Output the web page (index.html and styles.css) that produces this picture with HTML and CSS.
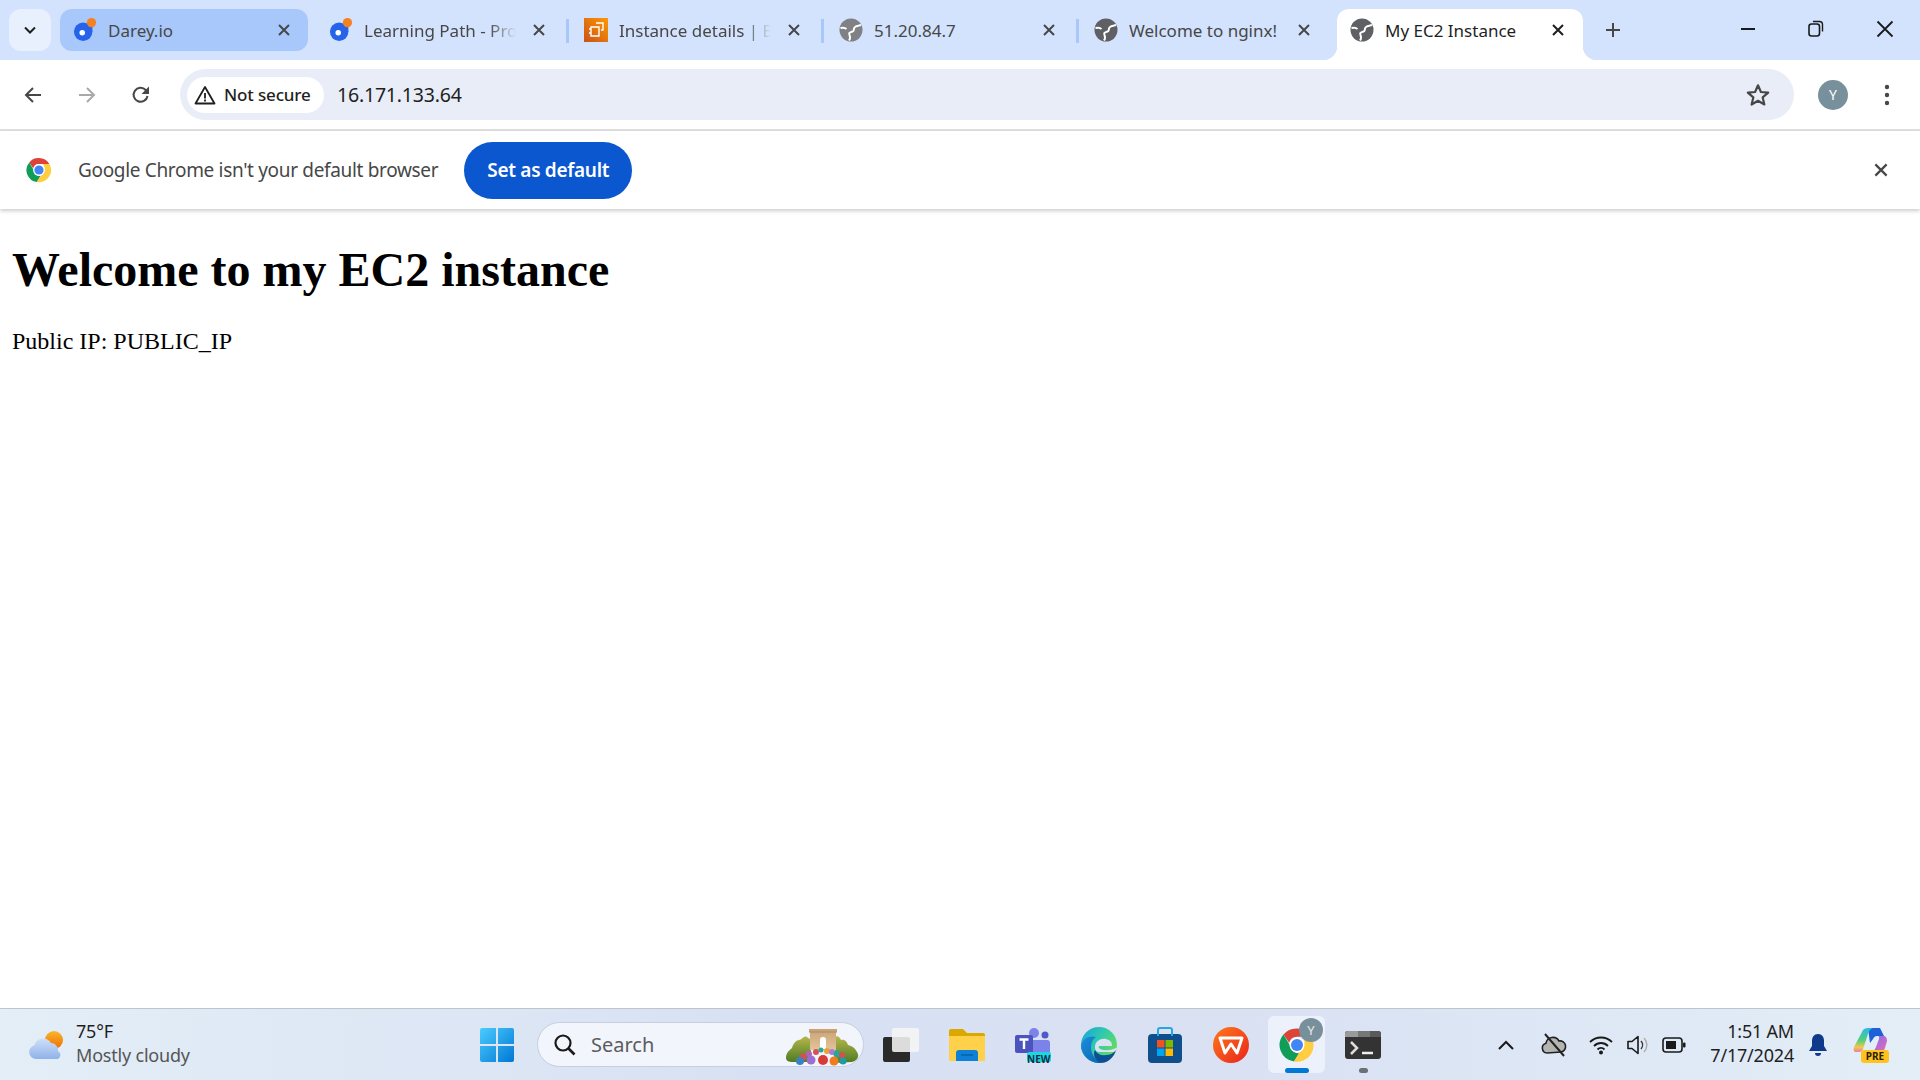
FILE: index.html
```html
<!DOCTYPE html>
<html lang="en">
<head>
  <meta charset="UTF-8" />
  <title>My EC2 Instance</title>
  <link rel="stylesheet" href="styles.css">
</head>
<body>

<svg class="defs" width="0" height="0">
  <symbol id="globe" viewBox="0 0 24 24">
    <circle cx="12" cy="12" r="11.500" fill="currentColor"/>
    <path d="M22 7c-3 1-5 .5-6.500 2.500s.5 3-2 4-4 1-3 3.500 1 3.500-.5 5.500" fill="none" stroke="#fff" stroke-width="2"/>
    <path d="M1.500 10c2.500-.5 4.500-.5 6 1" fill="none" stroke="#fff" stroke-width="1.800"/>
  </symbol>
  <symbol id="cross" viewBox="0 0 16 16">
    <path d="M3 3l10 10M13 3L3 13" fill="none" stroke="currentColor" stroke-width="2"/>
  </symbol>
  <symbol id="darey" viewBox="0 0 26 26">
    <circle cx="11" cy="15" r="10" fill="#2563eb"/>
    <path d="M16 5h5v10h-5z" fill="#2563eb"/>
    <circle cx="10" cy="16" r="3" fill="#fff"/>
    <circle cx="20" cy="5" r="5" fill="#f58220"/>
  </symbol>
</svg>

<header class="tabstrip">
  <button class="tab-search">
    <svg width="14" height="14" viewBox="0 0 14 14"><path d="M2 4.500l5 5 5-5" fill="none" stroke="#1f1f1f" stroke-width="2"/></svg>
  </button>

  <div class="tab tab-hover">
    <svg class="favicon"><use href="#darey"/></svg>
    <span class="tab-title">Darey.io</span>
    <svg class="tab-close"><use href="#cross"/></svg>
  </div>
  <div class="tab">
    <svg class="favicon"><use href="#darey"/></svg>
    <span class="tab-title fade">Learning Path - Project</span>
    <svg class="tab-close"><use href="#cross"/></svg>
  </div>
  <div class="tab sep">
    <svg class="favicon" viewBox="0 0 24 24">
      <defs><linearGradient id="aws" x1="0" y1="1" x2="1" y2="0"><stop offset="0" stop-color="#c8511b"/><stop offset="1" stop-color="#f90"/></linearGradient></defs>
      <rect width="24" height="24" fill="url(#aws)"/>
      <path d="M12 5h7v7h-2M7 9h8v9H7zM5 11h2M5 15h2" fill="none" stroke="#fff" stroke-width="1.400"/>
    </svg>
    <span class="tab-title fade">Instance details | EC2</span>
    <svg class="tab-close"><use href="#cross"/></svg>
  </div>
  <div class="tab sep">
    <svg class="favicon globe-light"><use href="#globe"/></svg>
    <span class="tab-title">51.20.84.7</span>
    <svg class="tab-close"><use href="#cross"/></svg>
  </div>
  <div class="tab sep">
    <svg class="favicon globe-dark"><use href="#globe"/></svg>
    <span class="tab-title">Welcome to nginx!</span>
    <svg class="tab-close"><use href="#cross"/></svg>
  </div>
  <div class="tab tab-active">
    <svg class="favicon globe-dark"><use href="#globe"/></svg>
    <span class="tab-title">My EC2 Instance</span>
    <svg class="tab-close"><use href="#cross"/></svg>
  </div>

  <button class="new-tab">
    <svg width="18" height="18" viewBox="0 0 18 18"><path d="M9 2v14M2 9h14" stroke="#474747" stroke-width="2"/></svg>
  </button>

  <div class="win-controls">
    <svg width="16" height="16" viewBox="0 0 16 16"><path d="M1 8h14" stroke="#1a1a1a" stroke-width="2"/></svg>
    <svg width="16" height="18" viewBox="0 0 16 18"><rect x="1" y="4" width="10.500" height="12" rx="2.500" fill="none" stroke="#1a1a1a" stroke-width="1.600"/><path d="M5 1.500h6.500a3 3 0 0 1 3 3v7" fill="none" stroke="#1a1a1a" stroke-width="1.400"/></svg>
    <svg width="18" height="18" viewBox="0 0 18 18"><path d="M1.500 1.500l15 15M16.500 1.500l-15 15" stroke="#1a1a1a" stroke-width="1.800"/></svg>
  </div>
</header>

<nav class="toolbar">
  <div class="nav-btns">
    <svg width="20" height="20" viewBox="0 0 20 20"><path d="M18 10H3M10 3l-7 7 7 7" fill="none" stroke="#474747" stroke-width="2"/></svg>
    <svg width="20" height="20" viewBox="0 0 20 20"><path d="M2 10h15M10 3l7 7-7 7" fill="none" stroke="#a9a9a9" stroke-width="2"/></svg>
    <svg width="20" height="20" viewBox="0 0 20 20"><path d="M16.500 11a7 7 0 1 1-1.800-6L17 7.500" fill="none" stroke="#474747" stroke-width="2"/><path d="M18 1.500V9h-7.500z" fill="#474747"/></svg>
  </div>
  <div class="omnibox">
    <div class="not-secure">
      <svg width="22" height="20" viewBox="0 0 22 20"><path d="M11 2L1.500 18.500h19z" fill="none" stroke="#1f1f1f" stroke-width="1.800" stroke-linejoin="round"/><path d="M11 8v5.500M11 14.500v2" stroke="#1f1f1f" stroke-width="1.800"/></svg>
      <span>Not secure</span>
    </div>
    <span class="url">16.171.133.64</span>
    <svg class="star" width="26" height="26" viewBox="0 0 24 24"><path d="M12 3l2.700 6.200 6.700.6-5.100 4.400 1.600 6.600L12 17.300l-5.900 3.500 1.600-6.600-5.100-4.400 6.700-.6z" fill="none" stroke="#474747" stroke-width="2" stroke-linejoin="round"/></svg>
  </div>
  <div class="avatar">Y</div>
  <svg class="menu-dots" width="6" height="24" viewBox="0 0 6 24"><circle cx="3" cy="4" r="2.200" fill="#474747"/><circle cx="3" cy="12" r="2.200" fill="#474747"/><circle cx="3" cy="20" r="2.200" fill="#474747"/></svg>
</nav>

<div class="infobar">
  <svg class="chrome-logo" width="26" height="26" viewBox="0 0 48 48">
    <path d="M24 2a22 22 0 0 1 19 11H24a11 11 0 0 0-10.500 8L6 10A22 22 0 0 1 24 2z" fill="#db4437"/>
    <path d="M6 10l10 17a11 11 0 0 0 11 8L20 46A22 22 0 0 1 6 10z" fill="#0f9d58"/>
    <path d="M43 13a22 22 0 0 1-23 33l10-17a11 11 0 0 0 1-16z" fill="#ffcd40"/>
    <circle cx="24" cy="24" r="11" fill="#fff"/><circle cx="24" cy="24" r="8.500" fill="#4285f4"/>
  </svg>
  <span class="infobar-text">Google Chrome isn't your default browser</span>
  <button class="set-default">Set as default</button>
  <svg class="infobar-close" width="18" height="18"><use href="#cross"/></svg>
</div>

<main class="page">
  <h1>Welcome to my EC2 instance</h1>
  <p>Public IP: PUBLIC_IP</p>
</main>

<footer class="taskbar">
  <div class="weather">
    <svg width="36" height="30" viewBox="0 0 36 30">
      <defs>
        <linearGradient id="cloud" x1="0" y1="0" x2="0" y2="1"><stop offset="0" stop-color="#cfe0f7"/><stop offset="1" stop-color="#8fb2ea"/></linearGradient>
        <linearGradient id="sun" x1="0" y1="0" x2="0" y2="1"><stop offset="0" stop-color="#fbb62d"/><stop offset="1" stop-color="#ef6c00"/></linearGradient>
      </defs>
      <circle cx="25" cy="10" r="9" fill="url(#sun)"/>
      <path d="M7 29a7 7 0 0 1-1.500-13.800A9 9 0 0 1 22 13a7 7 0 0 1 7 8 4.500 4.500 0 0 1 0 8z" fill="url(#cloud)"/>
    </svg>
    <div class="weather-text">
      <span class="temp">75°F</span>
      <span class="cond">Mostly cloudy</span>
    </div>
  </div>

  <div class="task-icons">
    <div class="task-cell">
      <svg width="36" height="36" viewBox="0 0 36 36">
        <defs><linearGradient id="win" x1="0" y1="0" x2="1" y2="1"><stop offset="0" stop-color="#4ccbff"/><stop offset="1" stop-color="#0078d4"/></linearGradient></defs>
        <path d="M1 3a2 2 0 0 1 2-2h14v16H1zM19 1h14a2 2 0 0 1 2 2v14H19zM1 19h16v16H3a2 2 0 0 1-2-2zM19 19h16v14a2 2 0 0 1-2 2H19z" fill="url(#win)"/>
      </svg>
    </div>
    <div class="searchbox">
      <svg width="24" height="24" viewBox="0 0 24 24"><circle cx="10" cy="10" r="7.500" fill="none" stroke="#1a1a1a" stroke-width="2.200"/><path d="M15.500 15.500l6 6" stroke="#1a1a1a" stroke-width="2.600"/></svg>
      <span>Search</span>
      <svg class="search-art" width="76" height="38" viewBox="0 0 76 38">
        <defs>
          <linearGradient id="hedge" x1="0" y1="0" x2="0" y2="1"><stop offset="0" stop-color="#b5b84a"/><stop offset="1" stop-color="#4e7a24"/></linearGradient>
          <linearGradient id="arch" x1="0" y1="0" x2="0" y2="1"><stop offset="0" stop-color="#c9a274"/><stop offset="1" stop-color="#e3c49b"/></linearGradient>
        </defs>
        <path d="M1 30c0-6 4-8 6-10 1-4 4-8 7-8s5-5 8-3 3 2 4 4v21H8c-4 0-7-1-7-4z" fill="url(#hedge)"/>
        <path d="M50 9c3-2 5 1 6 3 4-1 6 2 7 5 5 1 8 4 10 9 1 4-2 7-6 8l-17 1z" fill="url(#hedge)"/>
        <path d="M24 1h28v3h-1v18H25V4h-1z" fill="url(#arch)"/>
        <path d="M24 4h28" stroke="#a98a63" stroke-width="1"/>
        <path d="M35 21V12a3 3 0 0 1 6 0v9z" fill="#fff"/>
        <circle cx="24" cy="26" r="3" fill="#b35fc0"/><circle cx="31" cy="24" r="3" fill="#d95050"/><circle cx="36" cy="22" r="2.500" fill="#27a79b"/><circle cx="42" cy="23" r="3" fill="#f0a030"/><circle cx="47" cy="24" r="3" fill="#a77bd6"/><circle cx="52" cy="26" r="3.500" fill="#27a79b"/><circle cx="57" cy="27" r="3" fill="#d84f4f"/><circle cx="18" cy="29" r="3.500" fill="#d94f4f"/>
        <circle cx="15" cy="33" r="4" fill="#3b82c4"/><circle cx="26" cy="32" r="4.500" fill="#9a6fd0"/><circle cx="38" cy="32" r="5" fill="#d83a3a"/><circle cx="49" cy="33" r="4.500" fill="#f07c1e"/><circle cx="58" cy="33" r="3.500" fill="#1f9aa8"/>
      </svg>
    </div>
    <div class="task-cell">
      <svg width="36" height="34" viewBox="0 0 36 34">
        <rect x="0" y="9" width="27" height="25" rx="2" fill="#2a2a2a"/>
        <rect x="9" y="0" width="27" height="24" rx="2" fill="#f5f5f5" opacity=".88"/>
      </svg>
    </div>
    <div class="task-cell">
      <svg width="36" height="32" viewBox="0 0 36 32">
        <path d="M0 2a2 2 0 0 1 2-2h12l4 4h16a2 2 0 0 1 2 2v4H0z" fill="#dba800"/>
        <path d="M0 7h36v25H0z" fill="#ffd04a"/>
        <path d="M7 32v-8a3 3 0 0 1 3-3h16a3 3 0 0 1 3 3v8z" fill="#0f80d7"/>
        <path d="M12 26h12" stroke="#0b5fa5" stroke-width="1.500"/>
      </svg>
    </div>
    <div class="task-cell">
      <svg width="36" height="34" viewBox="0 0 36 34">
        <circle cx="19" cy="5" r="5" fill="#7b83eb"/><circle cx="30" cy="7" r="3.500" fill="#5059c9"/>
        <rect x="14" y="12" width="21" height="16" rx="3" fill="#7b83eb"/>
        <rect x="0" y="7" width="18" height="18" rx="2" fill="#4b53bc"/>
        <path d="M4.500 11.500h9M9 11.500V21" stroke="#fff" stroke-width="2.400"/>
        <rect x="12" y="24" width="24" height="10" rx="2" fill="#1fd6e0"/>
      </svg>
      <span class="new-badge">NEW</span>
    </div>
    <div class="task-cell">
      <svg width="36" height="36" viewBox="0 0 36 36">
        <defs>
          <linearGradient id="edge" x1="0" y1="0" x2="1" y2=".6"><stop offset="0" stop-color="#1ba2dc"/><stop offset=".5" stop-color="#2ec8b0"/><stop offset="1" stop-color="#66dc5c"/></linearGradient>
          <linearGradient id="edge2" x1="0" y1="0" x2="1" y2="1"><stop offset="0" stop-color="#1b8fdc"/><stop offset="1" stop-color="#0d62b0"/></linearGradient>
        </defs>
        <circle cx="18" cy="18" r="18" fill="url(#edge)"/>
        <path d="M0 18C2 11 9 8 15 10 10 13 9 20 11 26c2 5 6 9 11 9.600A18 18 0 0 1 0 18z" fill="url(#edge2)"/>
        <path d="M14 20c0-6 6-9 11-8 4 1 6 3 6 7H19c-1 0-2 1-1 2 3 3 11 3 17 0 1 0 1 0 0 3v1H19c-4 0-5-2-5-5z" fill="#dbe2f3"/>
        <path d="M14 23c2 4 6 6 11 5 4 0 8-2 10-5-2 7-8 13-14 12.800C15 35 11 28 14 23z" fill="#0c4f96"/>
      </svg>
    </div>
    <div class="task-cell">
      <svg width="36" height="36" viewBox="0 0 36 36">
        <rect x="1" y="7" width="34" height="29" rx="4" fill="#0f4f8b"/>
        <path d="M11 9V3a2 2 0 0 1 2-2h10a2 2 0 0 1 2 2v6" fill="none" stroke="#27a7e0" stroke-width="2"/>
        <path d="M10 13h7.500v7.500H10z" fill="#f25022"/><path d="M18.500 13H26v7.500h-7.500z" fill="#7fba00"/><path d="M10 21.500h7.500V29H10z" fill="#00a4ef"/><path d="M18.500 21.500H26V29h-7.500z" fill="#ffb900"/>
      </svg>
    </div>
    <div class="task-cell">
      <svg width="36" height="36" viewBox="0 0 36 36">
        <defs><linearGradient id="wps" x1="0" y1="0" x2="1" y2="1"><stop offset="0" stop-color="#ff7a1a"/><stop offset="1" stop-color="#e9231c"/></linearGradient></defs>
        <circle cx="18" cy="18" r="18" fill="url(#wps)"/>
        <path d="M7 11h22l-5 15-6-9-6 9z" fill="none" stroke="#fff" stroke-width="3" stroke-linejoin="round"/>
      </svg>
    </div>
    <div class="task-cell task-active">
      <svg width="36" height="36" viewBox="0 0 48 48">
        <path d="M24 2a22 22 0 0 1 19 11H24a11 11 0 0 0-10.500 8L6 10A22 22 0 0 1 24 2z" fill="#db4437"/>
        <path d="M6 10l10 17a11 11 0 0 0 11 8L20 46A22 22 0 0 1 6 10z" fill="#0f9d58"/>
        <path d="M43 13a22 22 0 0 1-23 33l10-17a11 11 0 0 0 1-16z" fill="#ffcd40"/>
        <circle cx="24" cy="24" r="10" fill="#fff"/><circle cx="24" cy="24" r="8" fill="#4285f4"/>
      </svg>
      <span class="chrome-badge">Y</span>
      <span class="run-bar"></span>
    </div>
    <div class="task-cell">
      <svg width="36" height="28" viewBox="0 0 36 28">
        <rect width="36" height="28" rx="3" fill="#333"/>
        <path d="M0 3a3 3 0 0 1 3-3h10v6H0z" fill="#9a9a9a"/><path d="M13 0h12v6H13z" fill="#777"/><path d="M25 0h8a3 3 0 0 1 3 3v3H25z" fill="#5a5a5a"/>
        <path d="M6 11l6 6-6 6" fill="none" stroke="#ddd" stroke-width="2.500"/>
        <path d="M17 22h11" stroke="#eee" stroke-width="2.500"/>
      </svg>
      <span class="run-dot"></span>
    </div>
  </div>

  <div class="tray">
    <svg class="tray-up" width="16" height="10" viewBox="0 0 16 10"><path d="M1 9l7-7 7 7" fill="none" stroke="#1a1a1a" stroke-width="2"/></svg>
    <svg class="tray-cloud" width="26" height="24" viewBox="0 0 26 24"><path d="M6 20a5 5 0 0 1-1-9.800A7 7 0 0 1 18 8a5.500 5.500 0 0 1 2 11z" fill="#b4b4b0" stroke="#222" stroke-width="1.600"/><path d="M4 1l19 22" stroke="#222" stroke-width="2"/></svg>
    <svg class="tray-wifi" width="24" height="20" viewBox="0 0 24 20"><path d="M1 7c6-6 16-6 22 0M5 11c4-4 10-4 14 0M8.500 14.500c2-2 5-2 7 0" fill="none" stroke="#1a1a1a" stroke-width="1.800"/><circle cx="12" cy="17.500" r="2" fill="#1a1a1a"/></svg>
    <svg class="tray-sound" width="24" height="24" viewBox="0 0 24 24"><path d="M2 8.500h4l6-5v17l-6-5H2z" fill="none" stroke="#1a1a1a" stroke-width="1.600" stroke-linejoin="round"/><path d="M15 8a6 6 0 0 1 0 8" fill="none" stroke="#333" stroke-width="1.400"/><path d="M18 5a10 10 0 0 1 0 14" fill="none" stroke="#aaa" stroke-width="1.400"/></svg>
    <svg class="tray-batt" width="24" height="18" viewBox="0 0 24 18"><rect x="1" y="2" width="19" height="14" rx="3" fill="none" stroke="#1a1a1a" stroke-width="1.600"/><rect x="4" y="5" width="10" height="8" fill="#1a1a1a"/><rect x="21" y="6.500" width="2.500" height="5" rx="1" fill="#1a1a1a"/></svg>
    <div class="clock">
      <span>1:51 AM</span>
      <span>7/17/2024</span>
    </div>
    <svg class="tray-bell" width="22" height="24" viewBox="0 0 22 24"><path d="M11 1c4 0 6 3 6 7v5l3 5H2l3-5V8c0-4 2-7 6-7z" fill="#0f3a8c"/><path d="M8 20h6a3 3 0 0 1-6 0z" fill="#0f3a8c"/></svg>
    <div class="copilot">
      <svg width="36" height="26" viewBox="0 0 36 26">
        <defs>
          <linearGradient id="cop-left" x1="0" y1="0" x2="0" y2="1"><stop offset="0" stop-color="#2bb8e8"/><stop offset=".5" stop-color="#4fd07a"/><stop offset=".8" stop-color="#f2c84a"/><stop offset="1" stop-color="#f07aa8"/></linearGradient>
          <linearGradient id="cop-right" x1="0" y1="0" x2="1" y2="1"><stop offset="0" stop-color="#7a6cf0"/><stop offset="1" stop-color="#f06bb0"/></linearGradient>
        </defs>
        <path d="M15 1h12l4 8H24c-2 0-3 1-4 3l-3 4z" fill="#1f5fd8"/>
        <path d="M9 5c1-3 3-4 6-4h5c-3 1-4 3-5 6l-5 15c-1 2-2 3-4 3H3c-2 0-3-2-2-5z" fill="url(#cop-left)"/>
        <path d="M24 9h6c3 0 4 2 4 5l-2 7c-1 3-3 4-6 4h-7c2-1 3-3 4-5l3-8c0-2 1-3-2-3z" fill="url(#cop-right)"/>
      </svg>
      <span class="pre-badge">PRE</span>
    </div>
  </div>
</footer>

</body>
</html>
```

FILE: styles.css
```css
* {
  box-sizing: border-box;
}
html, body {
  margin: 0;
  height: 100%;
}
body {
  display: flex;
  flex-direction: column;
  height: 100vh;
  overflow: hidden;
  background: white;
  font-family: "Noto Sans", "Open Sans", sans-serif;
  color: #1f1f1f;
}
button {
  border: none;
  padding: 0;
  font-family: inherit;
  cursor: pointer;
}
.defs {
  position: absolute;
}

/* tab strip */
.tabstrip {
  display: flex;
  align-items: flex-start;
  flex: 0 0 60px;
  padding: 9px 0 0 9px;
  background: #d3e3fd;
}
.tab-search {
  flex: 0 0 42px;
  height: 42px;
  margin-right: 9px;
  border-radius: 12px;
  background: #e9f0fd;
  display: flex;
  align-items: center;
  justify-content: center;
}
.tab {
  position: relative;
  flex: 0 0 248px;
  min-width: 0;
  height: 42px;
  margin-right: 7px;
  display: flex;
  align-items: center;
  padding: 0 16px 0 14px;
  border-radius: 12px;
}
.tab-hover {
  padding-left: 13px;
  background: #a8c7fa;
}
.tab.sep::before {
  content: "";
  position: absolute;
  left: -4px;
  top: 10px;
  width: 3px;
  height: 24px;
  background: #a8c7fa;
}
.tab-active {
  height: 51px;
  flex-basis: 246px;
  margin-left: 2px;
  margin-right: 0;
  padding-bottom: 9px;
  padding-left: 13px;
  padding-right: 17px;
  background: white;
  border-radius: 12px 12px 0 0;
}
.tab-active::before,
.tab-active::after {
  content: "";
  position: absolute;
  bottom: 0;
  width: 14px;
  height: 14px;
}
.tab-active::before {
  left: -14px;
  background: radial-gradient(circle at 0 0, #d3e3fd 14px, white 14.500px);
}
.tab-active::after {
  right: -14px;
  background: radial-gradient(circle at 100% 0, #d3e3fd 14px, white 14.500px);
}
.favicon {
  flex: 0 0 24px;
  width: 24px;
  height: 24px;
  margin-right: 11px;
}
.globe-light {
  color: #7f8184;
}
.globe-dark {
  color: #5e6064;
}
.tab-title {
  flex: 1;
  min-width: 0;
  white-space: nowrap;
  overflow: hidden;
  font-size: 17px;
  color: #474747;
}
.tab-active .tab-title {
  color: #1f1f1f;
}
.tab-title.fade {
  -webkit-mask-image: linear-gradient(to right, black 82%, transparent 100%);
  mask-image: linear-gradient(to right, black 82%, transparent 100%);
}
.tab-close {
  flex: 0 0 16px;
  width: 16px;
  height: 16px;
  margin-left: 15px;
  color: #474747;
}
.tab-active .tab-close {
  color: #1f1f1f;
}
.new-tab {
  width: 42px;
  height: 42px;
  margin-left: 9px;
  background: none;
  display: flex;
  align-items: center;
  justify-content: center;
}
.win-controls {
  margin-left: auto;
  display: flex;
  align-items: center;
  gap: 52px;
  padding: 11px 26px 0 0;
}

/* toolbar */
.toolbar {
  flex: 0 0 71px;
  display: flex;
  align-items: center;
  background: white;
  border-radius: 12px 12px 0 0;
  border-bottom: 2px solid #e0e0e0;
}
.nav-btns {
  flex: 0 0 180px;
  display: flex;
  align-items: center;
  gap: 34px;
  padding-left: 23px;
}
.omnibox {
  flex: 0 0 1614px;
  height: 51px;
  display: flex;
  align-items: center;
  padding: 0 23px 0 7px;
  border-radius: 26px;
  background: #e9edf7;
}
.not-secure {
  height: 36px;
  width: 137px;
  display: flex;
  align-items: center;
  gap: 8px;
  padding-left: 7px;
  border-radius: 18px;
  background: white;
  font-size: 17px;
  font-weight: 500;
  letter-spacing: -0.15px;
}
.url {
  margin-left: 13px;
  font-size: 19.500px;
  letter-spacing: -0.2px;
}
.star {
  margin-left: auto;
}
.avatar {
  width: 30px;
  height: 30px;
  margin-left: 24px;
  border-radius: 50%;
  background: #78909c;
  color: white;
  font-size: 14px;
  display: flex;
  align-items: center;
  justify-content: center;
}
.menu-dots {
  margin-left: 36px;
}

/* infobar */
.infobar {
  flex: 0 0 78px;
  display: flex;
  align-items: center;
  padding: 0 30px 0 26px;
  background: white;
  box-shadow: 0 2px 4px rgba(0,0,0,0.2);
  position: relative;
}
.infobar-text {
  margin-left: 26px;
  font-size: 19px;
  letter-spacing: -0.33px;
  color: #474747;
}
.set-default {
  margin-left: 26px;
  width: 168px;
  height: 57px;
  border-radius: 29px;
  background: #0b57d0;
  color: white;
  font-size: 19px;
  font-weight: 600;
  letter-spacing: -0.3px;
}
.infobar-close {
  margin-left: auto;
  color: #474747;
}

/* page content */
.page {
  flex: 1;
  padding: 1px 12px;
  font-family: "Liberation Serif", serif;
  color: black;
  background: white;
}
h1 {
  margin: 32px 0 31px;
  font-size: 48px;
}
p {
  margin: 0;
  font-size: 24px;
}

/* taskbar */
.taskbar {
  flex: 0 0 72px;
  display: flex;
  align-items: center;
  border-top: 1px solid #bfc4cb;
  background: linear-gradient(to right, #e3eef7 0%, #d8e1f3 40%, #d9e1f3 65%, #e3eef7 100%);
}
.weather {
  flex: 0 0 464px;
  display: flex;
  align-items: center;
  gap: 11px;
  padding-left: 29px;
}
.weather-text {
  display: flex;
  flex-direction: column;
  gap: 2px;
  margin-top: -4px;
  font-size: 18px;
  line-height: 22px;
  letter-spacing: -0.2px;
}
.cond {
  color: #555;
}
.task-icons {
  display: flex;
  align-items: center;
}
.task-cell {
  position: relative;
  flex: 0 0 66px;
  height: 57px;
  display: flex;
  align-items: center;
  justify-content: center;
}
.searchbox {
  flex: 0 0 327px;
  height: 45px;
  margin: 0 4px 0 7px;
  display: flex;
  align-items: center;
  padding-left: 15px;
  border-radius: 23px;
  background: #f2f5fc;
  border: 1px solid #c6cee0;
  font-size: 20px;
  color: #5c5c5c;
  position: relative;
}
.searchbox span {
  margin-left: 14px;
}
.search-art {
  position: absolute;
  right: 2px;
  top: 5px;
}
.new-badge {
  position: absolute;
  left: 27px;
  bottom: 7px;
  font-size: 10px;
  font-weight: 700;
  color: #10304a;
}
.task-active {
  flex-basis: 57px;
  margin: 0 5px 0 4px;
  border-radius: 6px;
  background: #edf1fb;
}
.chrome-badge {
  position: absolute;
  right: 2px;
  top: 2px;
  width: 24px;
  height: 24px;
  border-radius: 50%;
  background: #78909c;
  color: #e8e8e8;
  font-size: 13px;
  display: flex;
  align-items: center;
  justify-content: center;
}
.run-bar {
  position: absolute;
  left: 17px;
  bottom: 0;
  width: 24px;
  height: 5px;
  border-radius: 3px;
  background: #0078d4;
}
.run-dot {
  position: absolute;
  left: 29px;
  bottom: 0;
  width: 9px;
  height: 5px;
  border-radius: 3px;
  background: #6b6f76;
}
.tray {
  margin-left: auto;
  display: flex;
  align-items: center;
  padding-right: 31px;
}
.tray-up {
  margin-right: 27px;
}
.tray-wifi {
  margin: 0 13px 0 22px;
}
.tray-batt {
  margin: 0 24px 0 12px;
}
.clock {
  display: flex;
  flex-direction: column;
  align-items: flex-end;
  gap: 2px;
  margin-top: -4px;
  font-size: 18px;
  line-height: 22px;
  letter-spacing: -0.2px;
  margin-right: 13px;
}
.copilot {
  position: relative;
  margin-left: 24px;
  width: 36px;
  height: 36px;
}
.pre-badge {
  position: absolute;
  right: 0;
  bottom: 0;
  width: 28px;
  height: 13px;
  border-radius: 3px;
  background: #ffc21f;
  color: #2a2000;
  font-size: 10px;
  font-weight: 700;
  line-height: 13px;
  text-align: center;
}
```
